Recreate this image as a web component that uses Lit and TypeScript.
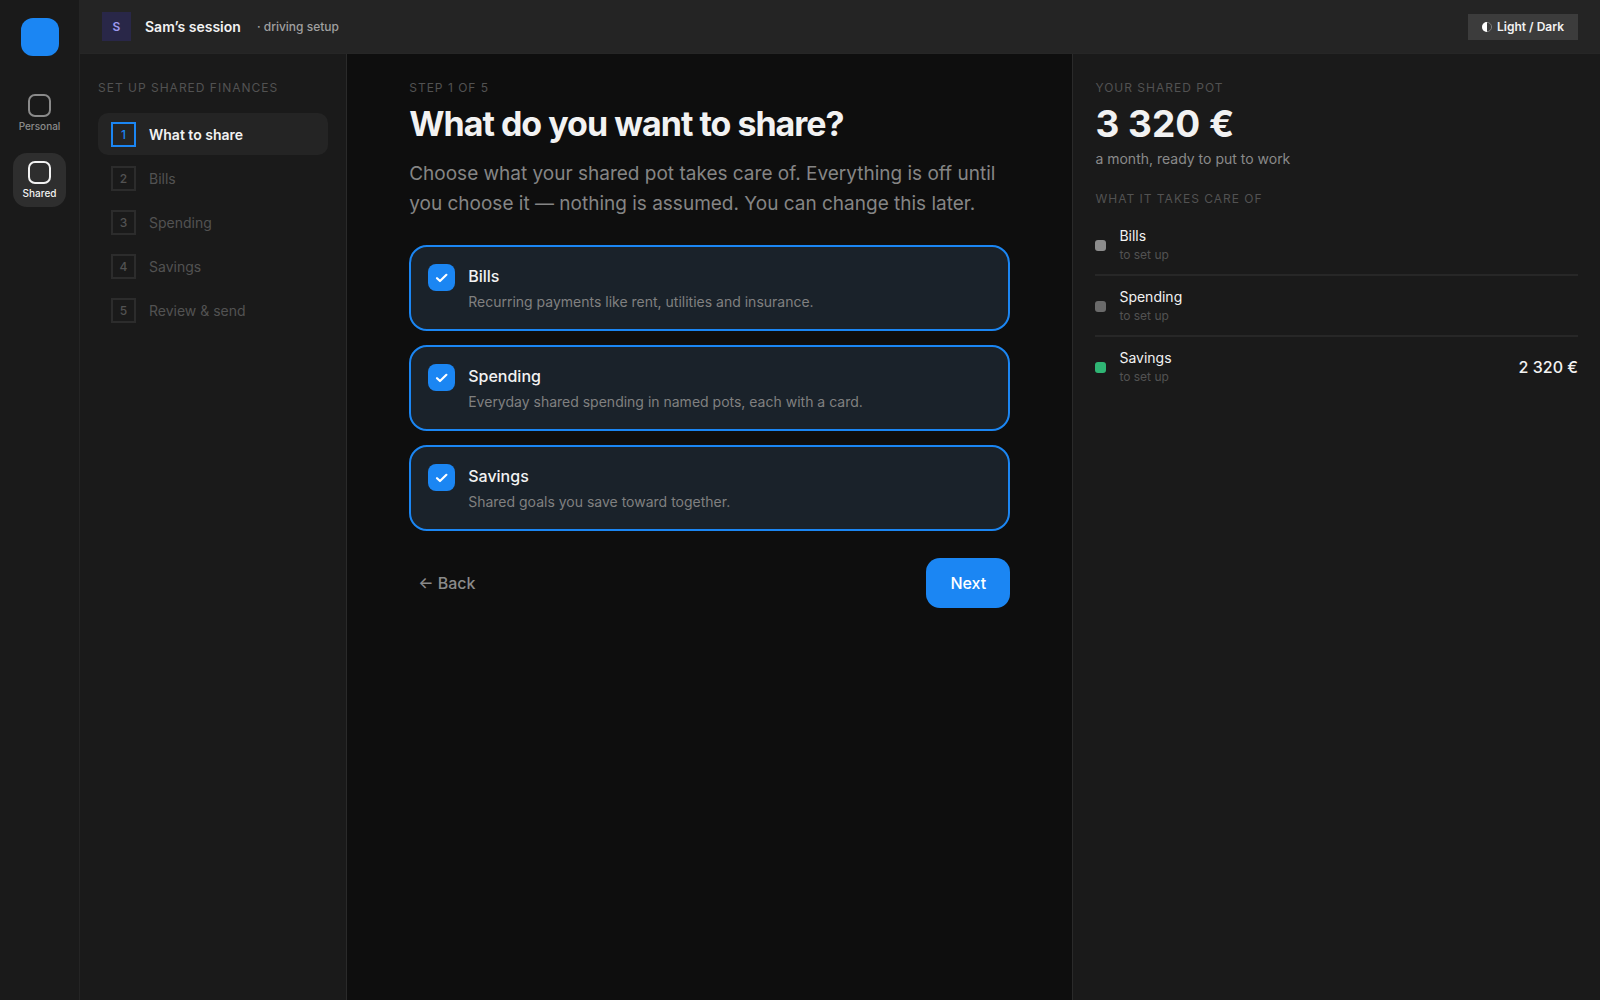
import { LitElement, html, css, svg } from "lit";
import { customElement, state } from "lit/decorators.js";

interface Area {
  id: string;
  name: string;
  description: string;
  swatch: string;
  amount: string;
}

const AREAS: Area[] = [
  { id: "bills", name: "Bills", description: "Recurring payments like rent, utilities and insurance.", swatch: "#8c8c8c", amount: "" },
  { id: "spending", name: "Spending", description: "Everyday shared spending in named pots, each with a card.", swatch: "#6a6a6a", amount: "" },
  { id: "savings", name: "Savings", description: "Shared goals you save toward together.", swatch: "#2fb574", amount: "2 320 €" },
];

const STEPS = ["What to share", "Bills", "Spending", "Savings", "Review & send"];

const squircle = svg`<rect x="1" y="1" width="21" height="21" rx="6" fill="none" stroke="currentColor" stroke-width="2"></rect>`;

@customElement("app-root")
export class AppRoot extends LitElement {
  @state() private chosen = new Set(AREAS.map((area) => area.id));

  static styles = css`
    :host {
      display: block;
      color: #f2f2f2;
      background: #0e0e0e;
      font-family: Inter, "Liberation Sans", sans-serif;
    }
    * { box-sizing: border-box; }
    h1, h2, p, ol, ul { margin: 0; padding: 0; }
    ol, ul { list-style: none; }
    button, a { font: inherit; color: inherit; text-decoration: none; }
    button { border: 0; cursor: pointer; }
    .shell { display: flex; min-height: 100vh; }

    .rail {
      flex: none;
      width: 80px;
      padding-top: 18px;
      display: flex;
      flex-direction: column;
      align-items: center;
      background: #1a1a1a;
      border-right: 1px solid #242424;
    }
    .logo { width: 38px; height: 38px; border-radius: 12px; background: #1b86f3; margin-bottom: 30px; }
    .rail-link {
      width: 53px;
      height: 54px;
      margin-bottom: 13px;
      padding-top: 8px;
      display: flex;
      flex-direction: column;
      align-items: center;
      gap: 3px;
      border-radius: 14px;
      color: #8a8a8a;
      font-size: 10px;
      line-height: 12px;
      font-weight: 500;
    }
    .rail-link.active { background: #2e2e2e; color: #f2f2f2; }
    .rail-icon { width: 23px; height: 23px; display: block; flex: none; }

    .page { flex: 1; min-width: 0; display: flex; flex-direction: column; }
    .topbar {
      display: flex;
      align-items: center;
      padding: 12px 22px;
      background: #242424;
      border-bottom: 1px solid #262626;
    }
    .avatar {
      width: 29px;
      height: 29px;
      display: grid;
      place-items: center;
      background: #292748;
      color: #a09aee;
      font-size: 12px;
      font-weight: 600;
    }
    .session { margin-left: 14px; font-size: 14px; font-weight: 600; }
    .session-note { margin-left: 16px; font-size: 12px; font-weight: 500; color: #a0a0a0; }
    .theme {
      margin-left: auto;
      padding: 0 14px;
      height: 26px;
      display: flex;
      align-items: center;
      gap: 5px;
      background: #3c3c3c;
      font-size: 12px;
      font-weight: 600;
    }
    .theme-icon { width: 10px; height: 10px; }

    .columns { flex: 1; display: grid; grid-template-columns: 267px minmax(0, 11fr) minmax(0, 8fr); }
    .label {
      font-size: 12px;
      line-height: 16px;
      font-weight: 400;
      letter-spacing: 1px;
      text-transform: uppercase;
      color: #525252;
    }

    .steps { padding: 26px 18px; background: #1a1a1a; border-right: 1px solid #2a2a2a; }
    .step-list { margin-top: 17px; display: grid; gap: 2px; }
    .step {
      height: 42px;
      padding: 0 13px;
      display: flex;
      align-items: center;
      gap: 13px;
      border-radius: 10px;
      color: #525252;
      font-size: 14px;
    }
    .step-number {
      width: 25px;
      height: 25px;
      display: grid;
      place-items: center;
      border: 2px solid #2c2c2c;
      font-size: 12px;
      font-weight: 500;
    }
    .step.current { background: #242424; color: #f2f2f2; font-weight: 600; }
    .step.current .step-number { border-color: #1b86f3; color: #1b86f3; }

    .main { padding: 26px 24px; }
    .form { max-width: 601px; margin: 0 auto; }
    .title { margin-top: 7px; font-size: 34px; line-height: 42px; font-weight: 700; letter-spacing: -1px; }
    .lead { margin-top: 14px; font-size: 19px; line-height: 30px; color: #858585; }
    .cards { margin-top: 26px; display: grid; gap: 14px; }
    .card {
      min-height: 86px;
      padding: 17px;
      display: flex;
      align-items: flex-start;
      gap: 13px;
      border: 2px solid #2c2c2c;
      border-radius: 18px;
      background: #1a1a1a;
      cursor: pointer;
    }
    .card:has(.tick-input:checked) { border-color: #1b86f3; background: #1a222a; }
    .tick { display: grid; flex: none; }
    .tick-input, .tick-mark { grid-area: 1 / 1; width: 27px; height: 27px; margin: 0; }
    .tick-input { appearance: none; border-radius: 8px; background: #3c3c3c; }
    .tick-input:checked { background: #1b86f3; }
    .tick-mark { display: none; pointer-events: none; }
    .tick-input:checked + .tick-mark { display: block; }
    .card-text { display: grid; gap: 4px; }
    .card-name { font-size: 16px; line-height: 24px; font-weight: 500; }
    .card-note { font-size: 14px; line-height: 20px; color: #808080; }
    .actions { margin-top: 27px; display: flex; align-items: center; justify-content: space-between; font-size: 16px; font-weight: 500; }
    .back { padding: 0 9px; height: 50px; background: none; color: #8a8a8a; }
    .next { padding: 0 24px; height: 50px; border-radius: 14px; background: #1b86f3; color: #ffffff; }

    .pot { padding: 26px 22px; background: #1a1a1a; border-left: 1px solid #2a2a2a; }
    .total { margin-top: 6px; font-size: 37px; line-height: 44px; font-weight: 700; }
    .total-note { margin-top: 3px; font-size: 14px; line-height: 20px; color: #8a8a8a; }
    .pot .second { margin-top: 22px; }
    .pot-list { margin-top: 8px; }
    .pot-row { display: flex; align-items: center; gap: 13px; padding: 11px 0 10px; }
    .pot-row + .pot-row { border-top: 2px solid #272727; }
    .swatch { width: 11px; height: 11px; border-radius: 3px; }
    .pot-name { display: block; font-size: 14px; line-height: 20px; }
    .pot-status { display: block; font-size: 12px; line-height: 18px; color: #525252; }
    .pot-amount { margin-left: auto; font-size: 16px; font-weight: 500; }
  `;

  private toggle(id: string) {
    const next = new Set(this.chosen);
    next.has(id) ? next.delete(id) : next.add(id);
    this.chosen = next;
  }

  private renderCard(area: Area) {
    return html`
      <label class="card" for=${area.id}>
        <span class="tick">
          <input class="tick-input" type="checkbox" id=${area.id}
            .checked=${this.chosen.has(area.id)} @change=${() => this.toggle(area.id)} />
          <svg class="tick-mark" viewBox="0 0 27 27" aria-hidden="true">
            <path d="M9 14.2 12 17 18.4 10.8" fill="none" stroke="#ffffff" stroke-width="2.2" stroke-linecap="round" stroke-linejoin="round"></path>
          </svg>
        </span>
        <span class="card-text">
          <span class="card-name">${area.name}</span>
          <span class="card-note">${area.description}</span>
        </span>
      </label>`;
  }

  render() {
    return html`
      <div class="shell">
        <nav class="rail">
          <div class="logo"></div>
          <a class="rail-link" href="#personal"><svg class="rail-icon" viewBox="0 0 23 23">${squircle}</svg>Personal</a>
          <a class="rail-link active" href="#shared"><svg class="rail-icon" viewBox="0 0 23 23">${squircle}</svg>Shared</a>
        </nav>
        <div class="page">
          <header class="topbar">
            <span class="avatar">S</span>
            <span class="session">Sam’s session</span>
            <span class="session-note">· driving setup</span>
            <button class="theme" type="button">
              <svg class="theme-icon" viewBox="0 0 10 10" aria-hidden="true">
                <circle cx="5" cy="5" r="4.6" fill="none" stroke="#8c8c8c" stroke-width="0.8"></circle>
                <path d="M5 0a5 5 0 0 0 0 10z" fill="#ffffff"></path>
              </svg>
              Light / Dark
            </button>
          </header>
          <div class="columns">
            <aside class="steps">
              <h2 class="label">Set up shared finances</h2>
              <ol class="step-list">
                ${STEPS.map((step, i) => html`
                  <li class="step ${i === 0 ? "current" : ""}"><span class="step-number">${i + 1}</span>${step}</li>`)}
              </ol>
            </aside>
            <main class="main">
              <form class="form" @submit=${(e: Event) => e.preventDefault()}>
                <p class="label">Step 1 of 5</p>
                <h1 class="title">What do you want to share?</h1>
                <p class="lead">Choose what your shared pot takes care of. Everything is off until you choose it — nothing is assumed. You can change this later.</p>
                <div class="cards">${AREAS.map((area) => this.renderCard(area))}</div>
                <div class="actions">
                  <button class="back" type="button">← Back</button>
                  <button class="next" type="submit">Next</button>
                </div>
              </form>
            </main>
            <aside class="pot">
              <h2 class="label">Your shared pot</h2>
              <p class="total">3 320 €</p>
              <p class="total-note">a month, ready to put to work</p>
              <h2 class="label second">What it takes care of</h2>
              <ul class="pot-list">
                ${AREAS.map((area) => html`
                  <li class="pot-row">
                    <span class="swatch" style="background:${area.swatch}"></span>
                    <span><span class="pot-name">${area.name}</span><span class="pot-status">to set up</span></span>
                    <span class="pot-amount">${area.amount}</span>
                  </li>`)}
              </ul>
            </aside>
          </div>
        </div>
      </div>`;
  }
}
